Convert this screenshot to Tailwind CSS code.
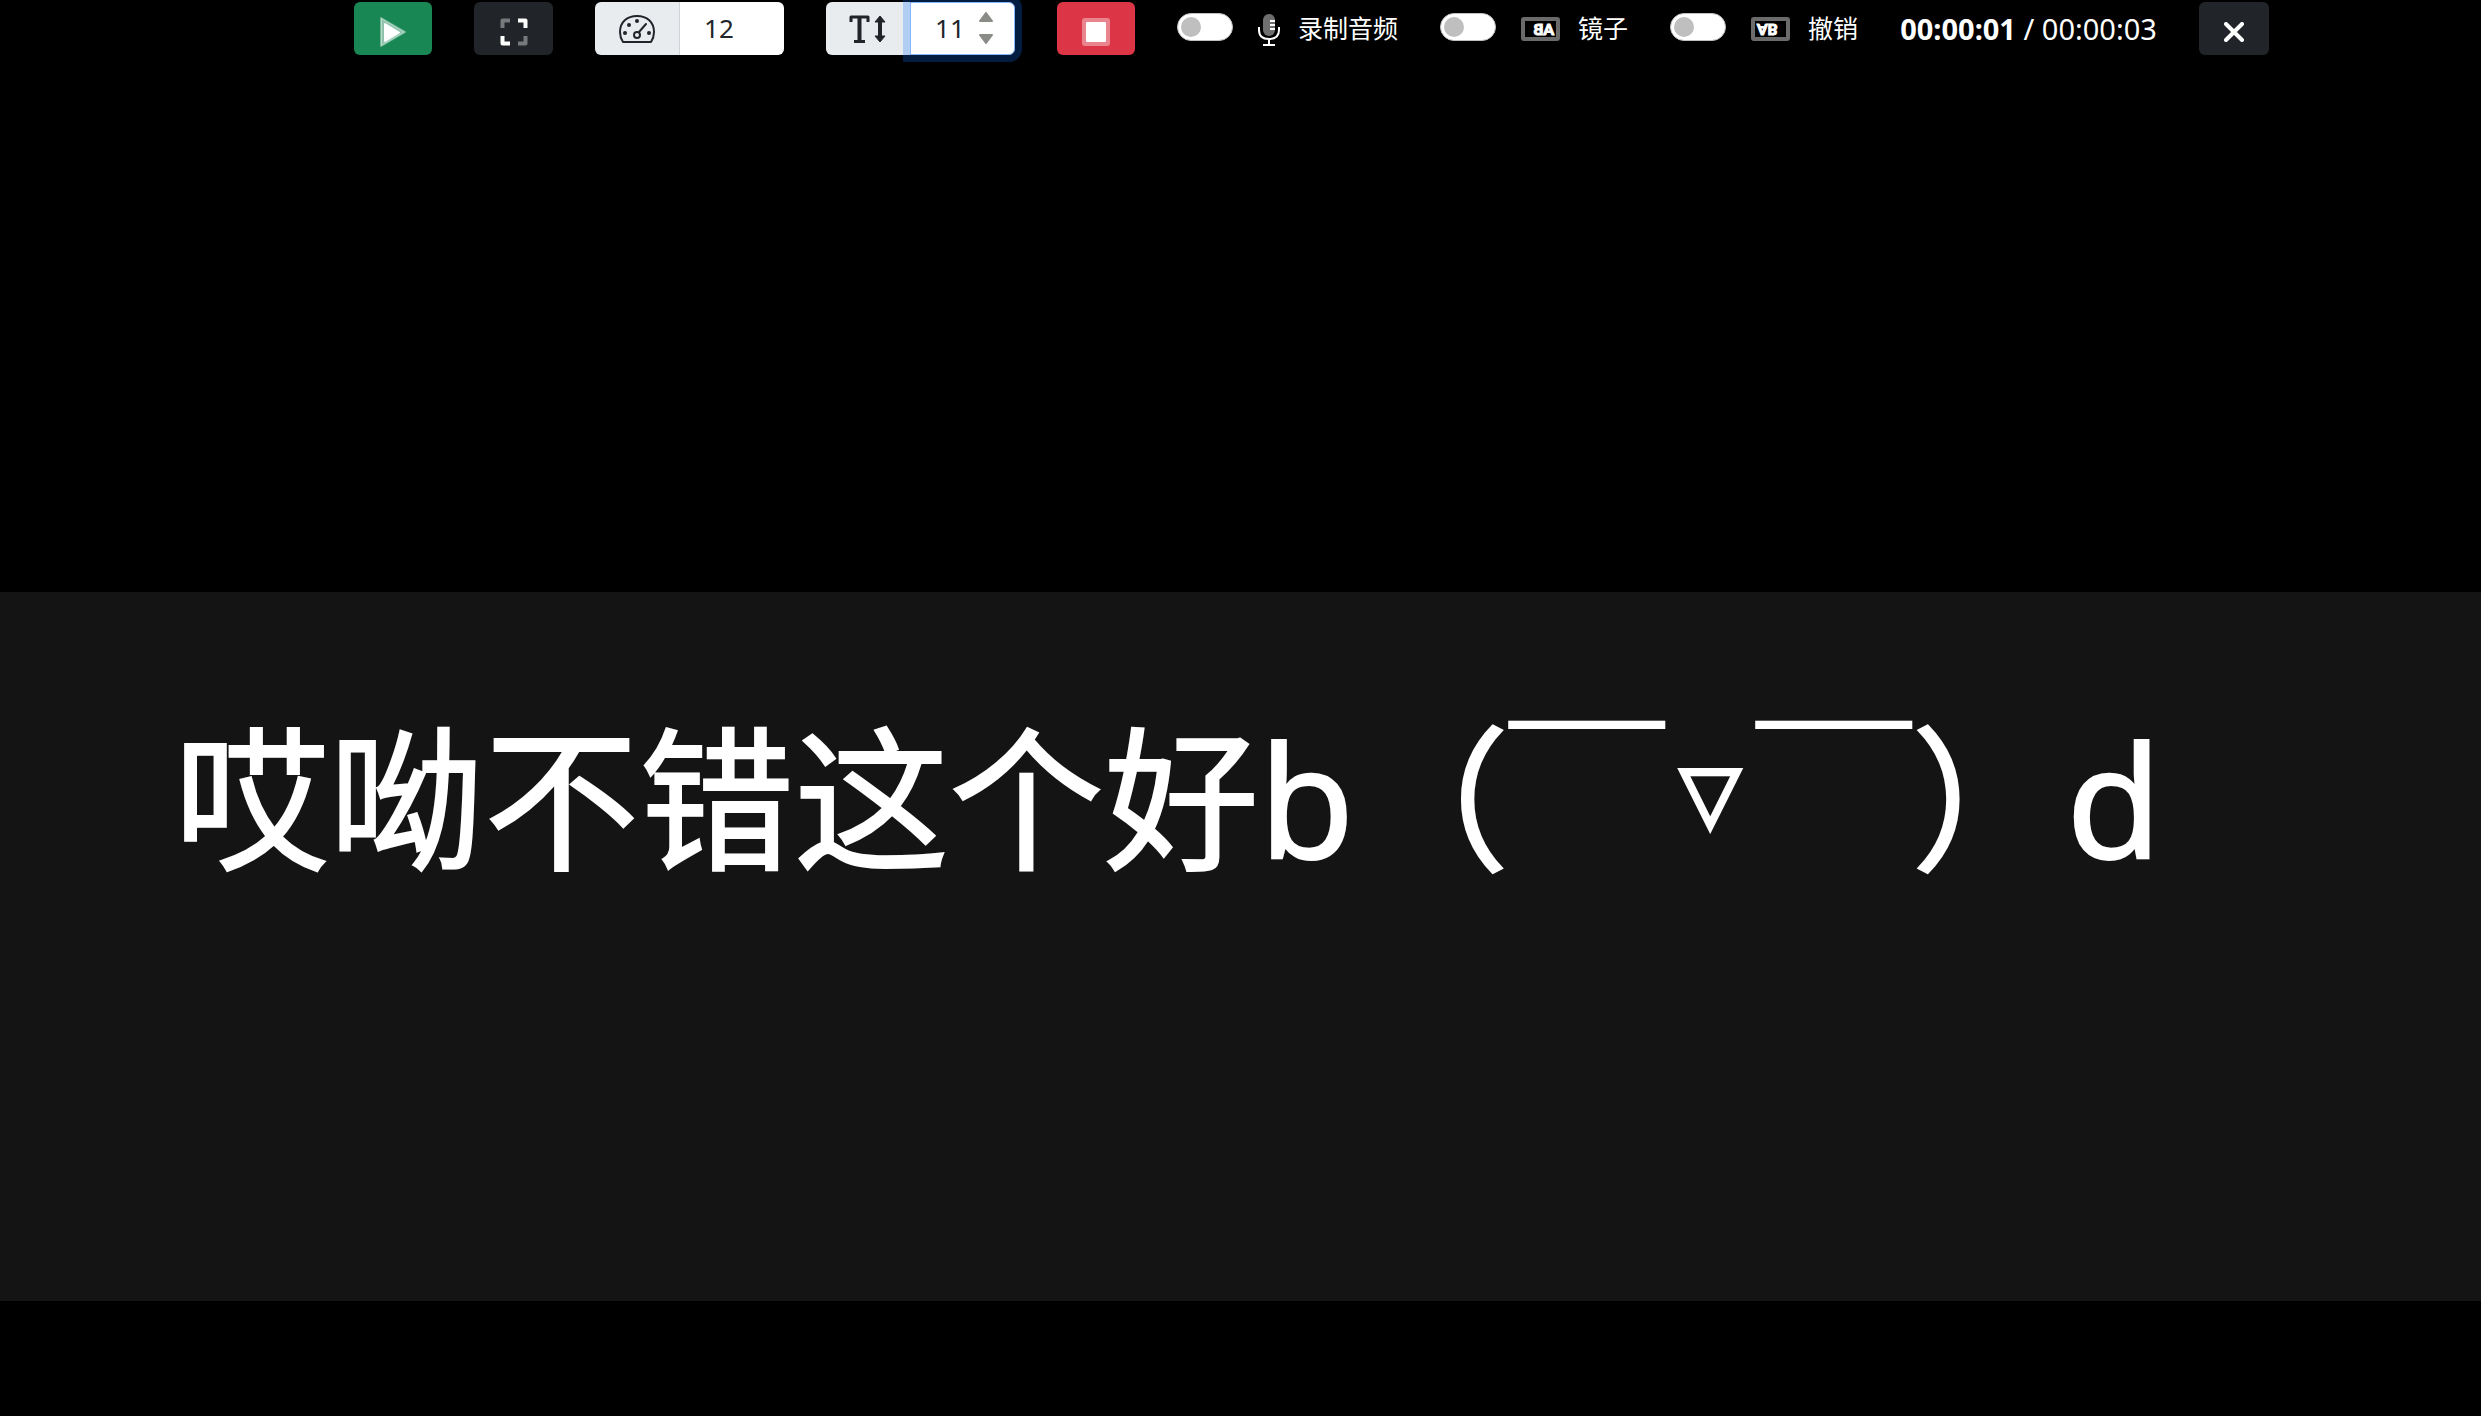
<!DOCTYPE html>
<html lang="zh-CN">
<head>
    <meta charset="UTF-8">
    <meta name="viewport" content="width=device-width, initial-scale=1.0">
    <title>提词器</title>
    <script src="https://cdn.jsdelivr.net/npm/@tailwindcss/browser@4"></script>
</head>
<body class="bg-black text-white font-['Noto_Sans','Noto_Sans_CJK_SC',sans-serif]">
    <div class="grid grid-rows-[592fr_709fr_115fr] h-screen overflow-hidden">
        <!-- Toolbar -->
        <header class="flex items-start justify-center gap-[42px] pt-[2px] pl-[142px]">
            <button type="button" aria-label="播放" class="flex items-center justify-center w-[78px] h-[53px] rounded-md bg-[#198754]">
                <svg class="w-[28px] h-[32px] mt-[6px]" viewBox="0 0 28 32">
                    <path d="M2 2v28L26 16z" fill="#fff" fill-opacity=".5" stroke="#fff" stroke-opacity=".4" stroke-width="2" stroke-linejoin="round"/>
                    <path d="M6 8v17L20 16.500z" fill="#fff" stroke="#fff" stroke-width="2" stroke-linejoin="round"/>
                </svg>
            </button>
            <button type="button" aria-label="全屏" class="flex items-center justify-center w-[79px] h-[53px] rounded-md bg-[#212529]">
                <svg class="w-[28px] h-[28px] mt-[6px]" viewBox="0 0 28 28" fill="none" stroke-width="4" stroke-linejoin="round">
                    <path d="M10 2.500H2.500v7.500M18 25.500h7.500v-7.500" stroke="#77797b"/>
                    <path d="M18 2.500h7.500v7.500M10 25.500h-7.500v-7.500" stroke="#fff"/>
                </svg>
            </button>
            <div class="flex w-[189px] h-[53px]">
                <label for="speed" class="flex items-center justify-center w-[85px] rounded-l-md bg-[#e9ecef] border-r border-[#ced4da]">
                    <svg role="img" aria-label="速度" class="w-[36px] h-[30px]" viewBox="0 0 36 30" fill="none" stroke="#212529" stroke-width="2" stroke-linecap="round" stroke-linejoin="round">
                        <path d="M4 28h28c2-3 3-6 3-10C35 8 28 2 18 2S1 8 1 18c0 4 1 7 3 10z"/>
                        <circle cx="18" cy="21" r="3"/>
                        <path d="M20 18l7-8"/>
                        <g fill="#212529" stroke="none">
                            <circle cx="6" cy="19" r="2"/>
                            <circle cx="10" cy="11" r="2"/>
                            <circle cx="18" cy="7" r="2"/>
                            <circle cx="30" cy="19" r="2"/>
                        </g>
                    </svg>
                </label>
                <input id="speed" type="number" value="12" class="w-[104px] pl-6 rounded-r-md bg-white text-[#212529] text-[26px] outline-none [appearance:textfield]">
            </div>
            <div class="relative flex w-[189px] h-[53px]">
                <label for="fontSize" class="flex items-center justify-center w-[84px] rounded-l-md bg-[#e9ecef]">
                    <svg role="img" aria-label="字号" class="w-[38px] h-[28px]" viewBox="0 0 38 28" fill="none" stroke="#212529">
                        <path d="M2 7V2h17v5M5 26.500h11" stroke-width="3" stroke-linejoin="round"/>
                        <path d="M10.500 2v24M31 5v18" stroke-width="4"/>
                        <path d="M26 7l5-6 5 6zM26 21l5 6 5-6z" fill="#212529" stroke-width="1" stroke-linejoin="round"/>
                    </svg>
                </label>
                <input id="fontSize" type="number" value="11" class="w-[105px] pl-6 rounded-r-md bg-white border border-[#86b7fe] text-[#212529] text-[26px] outline-none ring-[7px] ring-[#0d6efd]/25 [appearance:textfield]">
                <svg class="absolute right-[22px] top-[10px] w-[14px] h-[32px]" viewBox="0 0 14 32" fill="#8a8c88" stroke="#8a8c88" stroke-width="2" stroke-linejoin="round">
                    <path d="M1 9l6-8 6 8zM1 23l6 8 6-8z"/>
                </svg>
            </div>
            <button type="button" aria-label="停止" class="flex items-center justify-center w-[78px] h-[53px] rounded-md bg-[#dc3545]">
                <svg class="w-[28px] h-[28px] mt-[6px]" viewBox="0 0 28 28">
                    <rect width="28" height="28" rx="3" fill="#fff" fill-opacity=".4"/>
                    <rect x="4" y="4" width="20" height="20" rx="1" fill="#fff"/>
                </svg>
            </button>

            <div class="flex items-center h-[53px]">
                <input id="record" type="checkbox" class="appearance-none w-[56px] h-[28px] mb-1 rounded-full bg-white border border-[#bfbfbf] before:block before:w-[20px] before:h-[20px] before:mt-[3px] before:ml-[3px] before:rounded-full before:bg-[#bfbfbf]">
                <label for="record" class="flex items-center text-[25px]">
                    <svg class="w-[22px] h-[32px] ml-[25px] mr-[18px] mt-[3px]" viewBox="0 0 22 32" fill="none">
                        <rect x="5" y="0" width="12" height="22" rx="6" fill="#6f6f6f"/>
                        <path d="M12 7h5M12 11h5M12 15h5" stroke="#fff" stroke-width="2"/>
                        <path d="M1 13v3c0 6 4 9 10 9s10-3 10-9v-3M11 25v5M5 31h12" stroke="#fff" stroke-width="2"/>
                    </svg>
                    录制音频
                </label>
            </div>
            <div class="flex items-center h-[53px]">
                <input id="mirror" type="checkbox" class="appearance-none w-[56px] h-[28px] mb-1 rounded-full bg-white border border-[#bfbfbf] before:block before:w-[20px] before:h-[20px] before:mt-[3px] before:ml-[3px] before:rounded-full before:bg-[#bfbfbf]">
                <label for="mirror" class="flex items-center text-[25px]">
                    <svg class="w-[39px] h-[24px] ml-[25px] mr-[18px]" viewBox="0 0 39 24">
                        <rect x="2" y="2" width="35" height="20" rx="1" fill="none" stroke="#6b6b6b" stroke-width="4"/>
                        <text class="text-[15px] font-black font-['Lato',sans-serif]" transform="translate(33 18) scale(-1 1)" fill="#fff" stroke="#fff" stroke-width="1">AB</text>
                    </svg>
                    镜子
                </label>
            </div>
            <div class="flex items-center h-[53px]">
                <input id="flip" type="checkbox" class="appearance-none w-[56px] h-[28px] mb-1 rounded-full bg-white border border-[#bfbfbf] before:block before:w-[20px] before:h-[20px] before:mt-[3px] before:ml-[3px] before:rounded-full before:bg-[#bfbfbf]">
                <label for="flip" class="flex items-center text-[25px]">
                    <svg class="w-[39px] h-[24px] ml-[25px] mr-[18px]" viewBox="0 0 39 24">
                        <rect x="2" y="2" width="35" height="20" rx="1" fill="none" stroke="#6b6b6b" stroke-width="4"/>
                        <text class="text-[15px] font-black font-['Lato',sans-serif]" transform="translate(6 7) scale(1 -1)" fill="#fff" stroke="#fff" stroke-width="1">AB</text>
                    </svg>
                    撤销
                </label>
            </div>

            <div class="h-[53px] text-[29px] leading-[53px] whitespace-nowrap"><b>00:00:01</b> / 00:00:03</div>
            <button type="button" aria-label="关闭" class="flex items-center justify-center w-[70px] h-[53px] rounded-md bg-[#212529]">
                <svg class="w-[20px] h-[20px] mt-[6px]" viewBox="0 0 20 20" stroke="#fff" stroke-width="4" stroke-linecap="round">
                    <path d="M2 2l16 16M18 2L2 18"/>
                </svg>
            </button>
        </header>

        <!-- Prompter text -->
        <main class="bg-[#141414] pl-[174px] pt-[96px]">
            <p class="text-[155px] leading-[220px] whitespace-nowrap [-webkit-text-stroke:2px_white]">哎呦不错这个好b（￣<span class="inline-block mx-4 text-[78px] leading-none align-[38px] font-['DejaVu_Sans',sans-serif] [-webkit-text-stroke:4px_white]">▽</span>￣）d</p>
        </main>
    </div>
</body>
</html>
